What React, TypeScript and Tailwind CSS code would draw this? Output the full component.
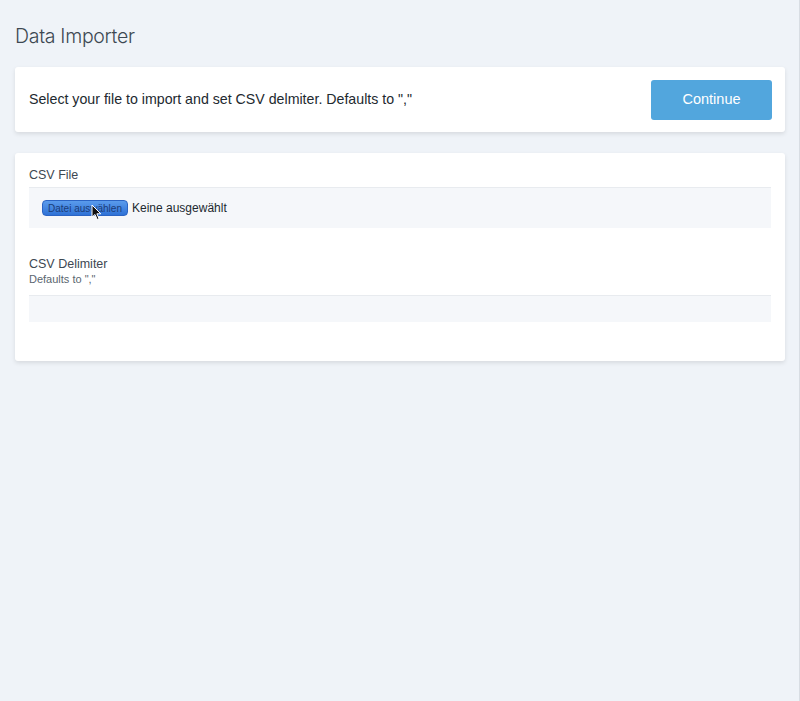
import React from 'react';

const Cursor = () => (
  <svg className="absolute left-[48px] top-[3px]" width="11" height="17" viewBox="0 0 11 17">
    <path d="M1 1 L1 13 L4 10.5 L6.2 15.5 L8 14.7 L5.9 9.8 L9.8 9.8 Z" fill="#111" stroke="#fff" strokeWidth="1" strokeLinejoin="round" />
  </svg>
);

export default function App() {
  return (
    <div className="min-h-[701px] w-full bg-[#eff3f8] pl-[15px] pr-[14px] pt-[25px] font-['Liberation_Sans',Arial,sans-serif] text-[#22292f] border-r border-[#d8dde3]">
      {/* Title */}
      <h1 className="text-[19.5px] leading-[22px] font-light text-[#3d4852] font-['Inter','Liberation_Sans',sans-serif] tracking-[-0.3px]">
        Data Importer
      </h1>

      {/* Intro card */}
      <div className="mt-[20px] flex h-[65px] items-center justify-between rounded-[3px] bg-white pl-[14px] pr-[13px] shadow-[0_2px_4px_rgba(0,0,0,0.1)]">
        <p className="text-[14.2px]">Select your file to import and set CSV delmiter. Defaults to ","</p>
        <button className="h-[40px] w-[121px] rounded-[3px] bg-[#52a6dd] text-[14.5px] font-medium text-white">Continue</button>
      </div>

      {/* Form card */}
      <div className="mt-[21px] h-[208px] rounded-[3px] bg-white px-[14px] pt-[14px] shadow-[0_2px_4px_rgba(0,0,0,0.1)]">
        <label className="block text-[12.5px] leading-[16px] text-[#3d4852]">CSV File</label>
        <div className="mt-[4px] flex h-[41px] items-center border-t border-[#e8ebef] bg-[#f5f7fa] pl-[13px]">
          <div className="relative flex h-[16px] w-[86px] items-center justify-center rounded-[4px] border border-[#2b64c4] bg-gradient-to-b from-[#5a9bec] to-[#2f72d6] text-[10px] text-[#1c3d78]">
            Datei auswählen
            <Cursor />
          </div>
          <span className="ml-[4px] text-[12px] text-[#22292f]">Keine ausgewählt</span>
        </div>

        <label className="mt-[28px] block text-[12.5px] leading-[16px] text-[#3d4852]">CSV Delimiter</label>
        <p className="text-[11px] leading-[14px] text-[#5a6670]">Defaults to ","</p>
        <div className="mt-[9px] h-[27px] border-t border-[#e8ebef] bg-[#f5f7fa]" />
      </div>
    </div>
  );
}
